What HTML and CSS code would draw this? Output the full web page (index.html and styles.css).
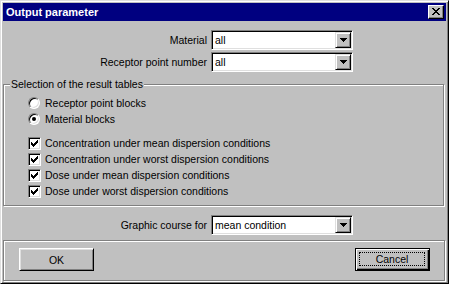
FILE: index.html
```html
<!DOCTYPE html>
<html lang="en">
<head>
    <meta charset="UTF-8">
    <title>Output parameter</title>
    <link rel="stylesheet" href="styles.css">
</head>
<body>
    <div class="window">
        <div class="titlebar">
            <span class="title">Output parameter</span>
            <div class="close">
                <svg width="8" height="7" viewBox="0 0 8 7" shape-rendering="crispEdges"><path d="M0 0h2v1h-2zM6 0h2v1h-2zM1 1h2v1h-2zM5 1h2v1h-2zM2 2h4v1h-4zM3 3h2v1h-2zM2 4h4v1h-4zM1 5h2v1h-2zM5 5h2v1h-2zM0 6h2v1h-2zM6 6h2v1h-2z" fill="#000"/></svg>
            </div>
        </div>

        <div class="client">
            <div class="fields">
                <span class="field-label">Material</span>
                <div class="combo">
                    <span class="combo-value">all</span>
                    <span class="combo-btn"><svg width="7" height="4" viewBox="0 0 7 4" shape-rendering="crispEdges"><path d="M0 0h7v1h-7zM1 1h5v1h-5zM2 2h3v1h-3zM3 3h1v1h-1z" fill="#000"/></svg></span>
                </div>
                <span class="field-label">Receptor point number</span>
                <div class="combo">
                    <span class="combo-value">all</span>
                    <span class="combo-btn"><svg width="7" height="4" viewBox="0 0 7 4" shape-rendering="crispEdges"><path d="M0 0h7v1h-7zM1 1h5v1h-5zM2 2h3v1h-3zM3 3h1v1h-1z" fill="#000"/></svg></span>
                </div>
            </div>

            <div class="group">
                <span class="legend">Selection of the result tables</span>
                <div class="options radios">
                    <div class="option"><span class="radio"></span>Receptor point blocks</div>
                    <div class="option"><span class="radio checked"></span>Material blocks</div>
                </div>
                <div class="options checks">
                    <div class="option"><span class="check"><svg width="7" height="7" viewBox="0 0 7 7" shape-rendering="crispEdges"><path d="M6 0h1v1h-1zM5 1h2v1h-2zM0 2h1v1h-1zM4 2h3v1h-3zM0 3h2v1h-2zM3 3h3v1h-3zM0 4h5v1h-5zM1 5h3v1h-3zM2 6h1v1h-1z" fill="#000"/></svg></span>Concentration under mean dispersion conditions</div>
                    <div class="option"><span class="check"><svg width="7" height="7" viewBox="0 0 7 7" shape-rendering="crispEdges"><path d="M6 0h1v1h-1zM5 1h2v1h-2zM0 2h1v1h-1zM4 2h3v1h-3zM0 3h2v1h-2zM3 3h3v1h-3zM0 4h5v1h-5zM1 5h3v1h-3zM2 6h1v1h-1z" fill="#000"/></svg></span>Concentration under worst dispersion conditions</div>
                    <div class="option"><span class="check"><svg width="7" height="7" viewBox="0 0 7 7" shape-rendering="crispEdges"><path d="M6 0h1v1h-1zM5 1h2v1h-2zM0 2h1v1h-1zM4 2h3v1h-3zM0 3h2v1h-2zM3 3h3v1h-3zM0 4h5v1h-5zM1 5h3v1h-3zM2 6h1v1h-1z" fill="#000"/></svg></span>Dose under mean dispersion conditions</div>
                    <div class="option"><span class="check"><svg width="7" height="7" viewBox="0 0 7 7" shape-rendering="crispEdges"><path d="M6 0h1v1h-1zM5 1h2v1h-2zM0 2h1v1h-1zM4 2h3v1h-3zM0 3h2v1h-2zM3 3h3v1h-3zM0 4h5v1h-5zM1 5h3v1h-3zM2 6h1v1h-1z" fill="#000"/></svg></span>Dose under worst dispersion conditions</div>
                </div>
            </div>

            <div class="fields course">
                <span class="field-label">Graphic course for</span>
                <div class="combo">
                    <span class="combo-value">mean condition</span>
                    <span class="combo-btn"><svg width="7" height="4" viewBox="0 0 7 4" shape-rendering="crispEdges"><path d="M0 0h7v1h-7zM1 1h5v1h-5zM2 2h3v1h-3zM3 3h1v1h-1z" fill="#000"/></svg></span>
                </div>
            </div>

            <div class="buttons">
                <button class="btn">OK</button>
                <button class="btn default"><span class="focus">Cancel</span></button>
            </div>
        </div>
    </div>
</body>
</html>
```

FILE: styles.css
```css
body {
    margin: 0;
    font-family: "Liberation Sans", Arial, sans-serif;
    font-size: 10.5px;
    color: #000;
    background-color: #c0c0c0;
}
.window {
    width: 449px;
    height: 284px;
    box-sizing: border-box;
    background-color: #c0c0c0;
    border: 1px solid;
    border-color: #dfdfdf #000 #000 #dfdfdf;
    box-shadow: inset 1px 1px #fff, inset -1px -1px #808080;
    padding: 2px;
    display: flex;
    flex-direction: column;
}
.titlebar {
    height: 18px;
    background-color: #000080;
    color: #fff;
    display: flex;
    align-items: center;
    justify-content: space-between;
    padding: 0 2px 0 3px;
}
.title {
    font-size: 11px;
    font-weight: bold;
}
.close {
    width: 16px;
    height: 14px;
    box-sizing: border-box;
    background-color: #c0c0c0;
    border: 1px solid;
    border-color: #fff #000 #000 #fff;
    box-shadow: inset -1px -1px #808080;
    display: flex;
    align-items: center;
    justify-content: center;
    padding: 0 1px 1px 0;
}
.client {
    flex: 1;
    display: flex;
    flex-direction: column;
    padding-top: 9px;
}
.fields {
    display: grid;
    grid-template-columns: 1fr 142px;
    column-gap: 4px;
    row-gap: 2px;
    align-items: center;
    margin-right: 93px;
}
.field-label {
    text-align: right;
    white-space: nowrap;
}
.combo {
    height: 20px;
    box-sizing: border-box;
    background-color: #fff;
    border: 1px solid;
    border-color: #808080 #fff #fff #808080;
    box-shadow: inset 1px 1px #000, inset -1px -1px #dfdfdf;
    padding: 1px;
    display: flex;
    align-items: center;
}
.combo-value {
    flex: 1;
    padding-left: 2px;
}
.combo-btn {
    width: 16px;
    height: 16px;
    box-sizing: border-box;
    background-color: #c0c0c0;
    border: 1px solid;
    border-color: #dfdfdf #000 #000 #dfdfdf;
    box-shadow: inset 1px 1px #fff, inset -1px -1px #808080;
    display: flex;
    align-items: center;
    justify-content: center;
}
.group {
    margin: 12px 2px 0 0;
    border: 1px solid #808080;
    box-shadow: inset 1px 1px #fff, 1px 1px #fff;
    padding: 0 0 6px 24px;
}
.legend {
    display: block;
    width: fit-content;
    margin: -7px 0 0 -18px;
    padding: 0 1px;
    line-height: 13px;
    background-color: #c0c0c0;
}
.radios {
    margin-top: 4px;
}
.checks {
    margin-top: 8px;
}
.option {
    display: flex;
    align-items: center;
    height: 16px;
    white-space: nowrap;
}
.radio {
    width: 12px;
    height: 12px;
    box-sizing: border-box;
    border-radius: 50%;
    background-color: #fff;
    border: 1px solid;
    border-color: #808080 #fff #fff #808080;
    box-shadow: inset 1px 1px #000, inset -1px -1px #dfdfdf;
    display: flex;
    align-items: center;
    justify-content: center;
    margin-right: 5px;
}
.radio.checked::after {
    content: "";
    width: 4px;
    height: 4px;
    border-radius: 50%;
    background-color: #000;
}
.check {
    width: 13px;
    height: 13px;
    box-sizing: border-box;
    background-color: #fff;
    border: 1px solid;
    border-color: #808080 #fff #fff #808080;
    box-shadow: inset 1px 1px #000, inset -1px -1px #dfdfdf;
    display: flex;
    align-items: center;
    justify-content: center;
    margin-right: 4px;
}
.course {
    margin-top: 9px;
}
.buttons {
    margin: 5px 1px 0 0;
    height: 41px;
    box-sizing: border-box;
    border: 1px solid #808080;
    box-shadow: inset 1px 1px #fff, 1px 1px #fff;
    display: flex;
    justify-content: space-between;
    align-items: flex-start;
    padding: 7px 14px 0 15px;
}
.btn {
    width: 75px;
    height: 23px;
    box-sizing: border-box;
    font: inherit;
    color: #000;
    background-color: #c0c0c0;
    border: 1px solid;
    border-color: #fff #000 #000 #fff;
    box-shadow: inset 1px 1px #dfdfdf, inset -1px -1px #808080;
    padding: 0;
}
.btn.default {
    border: 1px solid #000;
    box-shadow: inset 1px 1px #fff, inset -1px -1px #000, inset -2px -2px #808080;
    display: flex;
    padding: 3px 4px 4px 3px;
}
.focus {
    flex: 1;
    display: flex;
    align-items: center;
    justify-content: center;
    border: 1px dotted #000;
}
```
